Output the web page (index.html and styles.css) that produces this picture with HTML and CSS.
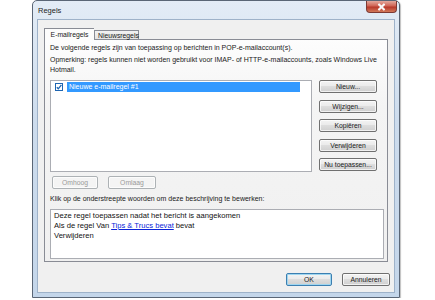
FILE: index.html
```html
<!DOCTYPE html>
<html>
<head>
<meta charset="utf-8">
<link rel="stylesheet" href="styles.css">
</head>
<body>
<div class="window">
  <div class="titlebar">
    <span class="title">Regels</span>
    <span class="close"><svg width="9" height="8" viewBox="0 0 9 8"><path d="M1.5 1 L7.5 7 M7.5 1 L1.5 7" stroke="#fff" stroke-width="2" fill="none"/><path d="M1.5 1 L7.5 7 M7.5 1 L1.5 7" stroke="#f6f6f6" stroke-width="1.2" fill="none"/></svg></span>
  </div>
  <div class="client">
    <div class="tabs">
      <span class="tab tab-active">E-mailregels</span>
      <span class="tab">Nieuwsregels</span>
    </div>
    <div class="panel">
      <p class="line">De volgende regels zijn van toepassing op berichten in POP-e-mailaccount(s).</p>
      <p class="note">Opmerking: regels kunnen niet worden gebruikt voor IMAP- of HTTP-e-mailaccounts, zoals Windows Live Hotmail.</p>
      <div class="rules">
        <div class="listbox">
          <div class="item">
            <span class="check"><svg width="8" height="8" viewBox="0 0 8 8"><rect x="0.5" y="0.5" width="7" height="7" fill="#fff" stroke="#1f66b1"/><path d="M1.8 4.2 L3.3 5.8 L6.4 1.8" stroke="#1f66b1" stroke-width="1.3" fill="none"/></svg></span>
            <span class="item-text">Nieuwe e-mailregel #1</span>
          </div>
        </div>
        <div class="side-buttons">
          <span class="btn">Nieuw...</span>
          <span class="btn">Wijzigen...</span>
          <span class="btn">Kopiëren</span>
          <span class="btn">Verwijderen</span>
          <span class="btn">Nu toepassen...</span>
        </div>
      </div>
      <div class="move">
        <span class="btn btn-disabled btn-up">Omhoog</span>
        <span class="btn btn-disabled btn-down">Omlaag</span>
      </div>
      <p class="hint">Klik op de onderstreepte woorden om deze beschrijving te bewerken:</p>
      <div class="desc">
        <div>Deze regel toepassen nadat het bericht is aangekomen</div>
        <div>Als de regel Van <a class="link">Tips &amp; Trucs bevat</a> bevat</div>
        <div>Verwijderen</div>
      </div>
    </div>
    <div class="footer">
      <span class="btn btn-default btn-ok">OK</span>
      <span class="btn btn-cancel">Annuleren</span>
    </div>
  </div>
</div>
</body>
</html>
```

FILE: styles.css
```css
html, body {
  margin: 0;
  padding: 0;
  background: #ffffff;
}
body {
  font-family: "Liberation Sans", Arial, sans-serif;
  font-size: 7px;
  color: #1a1a1a;
}
.window {
  box-sizing: border-box;
  margin-left: 32px;
  width: 368px;
  height: 298px;
  border: 1px solid #5a6676;
  border-radius: 5px 5px 0 0;
  background: linear-gradient(#e3ecf6, #cddced 40%, #c4d6ea);
  display: flex;
  flex-direction: column;
  box-shadow: 1px 1px 1px rgba(0,0,0,0.25);
}
.titlebar {
  height: 18px;
  display: flex;
  align-items: flex-start;
}
.title {
  padding-left: 5px;
  padding-top: 5px;
  font-size: 7.5px;
  color: #1e1e1e;
}
.close {
  margin-left: auto;
  margin-right: 2px;
  width: 31px;
  height: 12px;
  box-sizing: border-box;
  border: 1px solid #7d3a34;
  border-top: none;
  border-radius: 0 0 4px 4px;
  background: linear-gradient(#e3a89c, #cf6454 45%, #b7382a 55%, #d2795a);
  display: flex;
  align-items: center;
  justify-content: center;
}
.client {
  flex: 1;
  margin: 0 4px 4px 4px;
  border: 1px solid #9eb2c9;
  background: #f0f0f0;
  padding: 8px 6px 0 6px;
  display: flex;
  flex-direction: column;
}
.tabs {
  display: flex;
  height: 11px;
  align-items: flex-end;
  position: relative;
  z-index: 1;
}
.tab {
  box-sizing: border-box;
  height: 9px;
  padding: 0 3px;
  border: 1px solid #898c95;
  border-bottom: none;
  background: linear-gradient(#f2f2f2, #e3e3e3);
  line-height: 9px;
  font-size: 6.8px;
  margin-bottom: 0;
  width: 45px;
  text-align: center;
}
.tab-active {
  height: 12px;
  width: 50px;
  margin-bottom: -1px;
  background: #fcfcfc;
  line-height: 11px;
  border-right: none;
}
.panel {
  box-sizing: border-box;
  height: 223px;
  border: 1px solid #898c95;
  background: linear-gradient(#fdfdfd, #f4f4f4 30%, #f0f0f0);
  padding: 3px 3px 2px 5px;
  display: flex;
  flex-direction: column;
}
.line, .note, .hint {
  margin: 0;
  line-height: 9px;
}
.note {
  margin-top: 3px;
  width: 332px;
  line-height: 10px;
}
.rules {
  display: flex;
  margin-top: 5px;
  gap: 7px;
}
.listbox {
  box-sizing: border-box;
  width: 262px;
  height: 92px;
  border: 1px solid #abadb3;
  background: #ffffff;
  padding: 1px 0 0 4px;
}
.item {
  display: flex;
  align-items: center;
  height: 10px;
}
.check {
  width: 8px;
  height: 8px;
  display: flex;
}
.check svg {
  display: block;
}
.item-text {
  margin-left: 4px;
  width: 233px;
  height: 10px;
  line-height: 10px;
  background: #3399ff;
  color: #ffffff;
  padding-left: 2px;
  box-sizing: border-box;
}
.side-buttons {
  display: flex;
  flex-direction: column;
  gap: 6.5px;
}
.btn {
  box-sizing: border-box;
  display: flex;
  align-items: center;
  justify-content: center;
  height: 13px;
  width: 58px;
  border: 1px solid #707070;
  border-radius: 2px;
  background: linear-gradient(#f3f3f3, #ebebeb 45%, #dddddd 50%, #cfcfcf);
  box-shadow: inset 0 0 0 1px rgba(255,255,255,0.7);
  font-size: 6.8px;
  color: #1a1a1a;
}
.move {
  display: flex;
  gap: 10px;
  margin-top: 4px;
  margin-left: 2px;
}
.btn-disabled {
  border-color: #adb2b5;
  background: #f4f4f4;
  color: #9a9a9a;
}
.btn-up {
  width: 46px;
}
.btn-down {
  width: 48px;
}
.hint {
  margin-top: 5px;
  line-height: 10px;
}
.desc {
  box-sizing: border-box;
  margin-top: 5px;
  width: 334px;
  height: 50px;
  border: 1px solid #abadb3;
  background: #ffffff;
  padding: 1px 3px;
  font-size: 7.6px;
  line-height: 10px;
  color: #111;
}
.link {
  color: #0b24d8;
  text-decoration: underline;
}
.footer {
  display: flex;
  justify-content: flex-end;
  gap: 10px;
  margin-top: 11px;
  margin-right: -2px;
}
.btn-ok {
  width: 46px;
}
.btn-cancel {
  width: 48px;
}
.btn-default {
  border-color: #3c7fb1;
  box-shadow: inset 0 0 0 1px #9fd6f0;
}
```
